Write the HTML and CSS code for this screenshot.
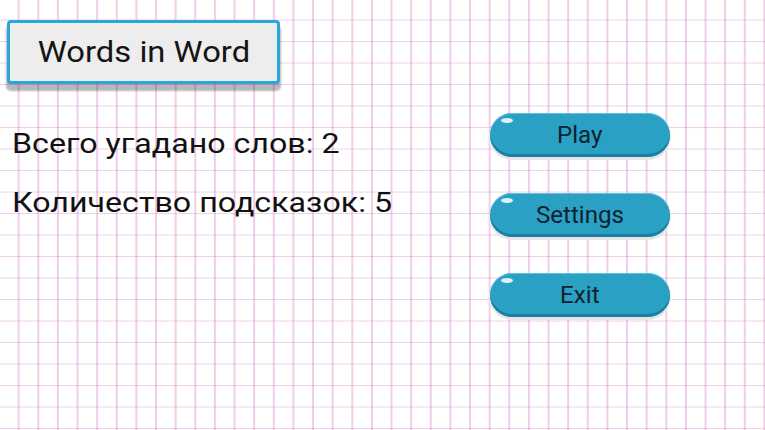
FILE: index.html
```html
<!DOCTYPE html>
<html lang="ru">
<head>
    <meta charset="UTF-8">
    <meta name="viewport" content="width=device-width, initial-scale=1.0">
    <title>Words in Word</title>
    <link rel="stylesheet" href="styles.css">
</head>
<body>
    <div class="screen">
        <div class="left-side">
            <div class="title-card"><span class="title-text">Words in Word</span></div>
            <p class="stat">Всего угадано слов: 2</p>
            <p class="stat">Количество подсказок: 5</p>
        </div>
        <div class="menu">
            <button class="menu-button"><span class="button-text">Play</span></button>
            <button class="menu-button"><span class="button-text">Settings</span></button>
            <button class="menu-button"><span class="button-text">Exit</span></button>
        </div>
    </div>
</body>
</html>
```

FILE: styles.css
```css
body{
    margin: 0;
    font-family: Roboto, "Liberation Sans", Arial, sans-serif;
}

.screen{
    width: 765px;
    height: 430px;
    display: flex;
    justify-content: space-between;
    background-color: white;
    background-image:
        linear-gradient(to right, transparent 17.4px, rgba(220, 135, 200, 0.42) 17.4px, rgba(220, 135, 200, 0.42) 19.2px, transparent 19.2px),
        linear-gradient(to bottom, transparent 19.1px, rgba(220, 135, 200, 0.4) 19.1px, rgba(220, 135, 200, 0.4) 20.9px, transparent 20.9px);
    background-size: 19.63px 21.5px;
    overflow: hidden;
}

.left-side{
    padding: 20px 0 0 7px;
}

.title-card{
    width: 267px;
    height: 58px;
    border: 3px solid #2aa6dd;
    border-radius: 4px;
    background-color: #ededed;
    box-shadow: 0 6px 2px 1px rgba(0, 0, 0, 0.28);
    display: flex;
    align-items: center;
    justify-content: center;
    font-size: 29px;
    color: #141414;
}

.title-text{
    display: inline-block;
    transform: scaleX(1.13);
}

.stat{
    margin: 0 0 0 5px;
    font-size: 27.5px;
    line-height: 59px;
    color: #111;
    transform: scaleX(1.17);
    transform-origin: left center;
    white-space: nowrap;
}

.stat:first-of-type{
    margin-top: 30px;
}

.menu{
    display: flex;
    flex-direction: column;
    gap: 36px;
    padding: 113px 95px 0 0;
}

.menu-button{
    position: relative;
    width: 180px;
    height: 44px;
    border: none;
    border-radius: 22px;
    background-color: #2aa0c4;
    box-shadow: inset 0 1px 0 #62c3de, inset 0 -3px 0 #1b7fa2, 0 2px 0 1px #e6e6e6;
    font-family: Roboto, "Liberation Sans", Arial, sans-serif;
    font-size: 23px;
    color: #10232c;
    cursor: pointer;
}

.button-text{
    display: inline-block;
    transform: scaleX(1.05);
}

.menu-button::before{
    content: '';
    position: absolute;
    left: -9px;
    right: -9px;
    top: 8px;
    bottom: 6px;
    border-radius: 20px;
    background-color: #e9e9e9;
    z-index: -1;
}

.menu-button::after{
    content: '';
    position: absolute;
    left: 11px;
    top: 5px;
    width: 12px;
    height: 5px;
    border-radius: 50%;
    background-color: rgba(255, 255, 255, 0.85);
}
```
